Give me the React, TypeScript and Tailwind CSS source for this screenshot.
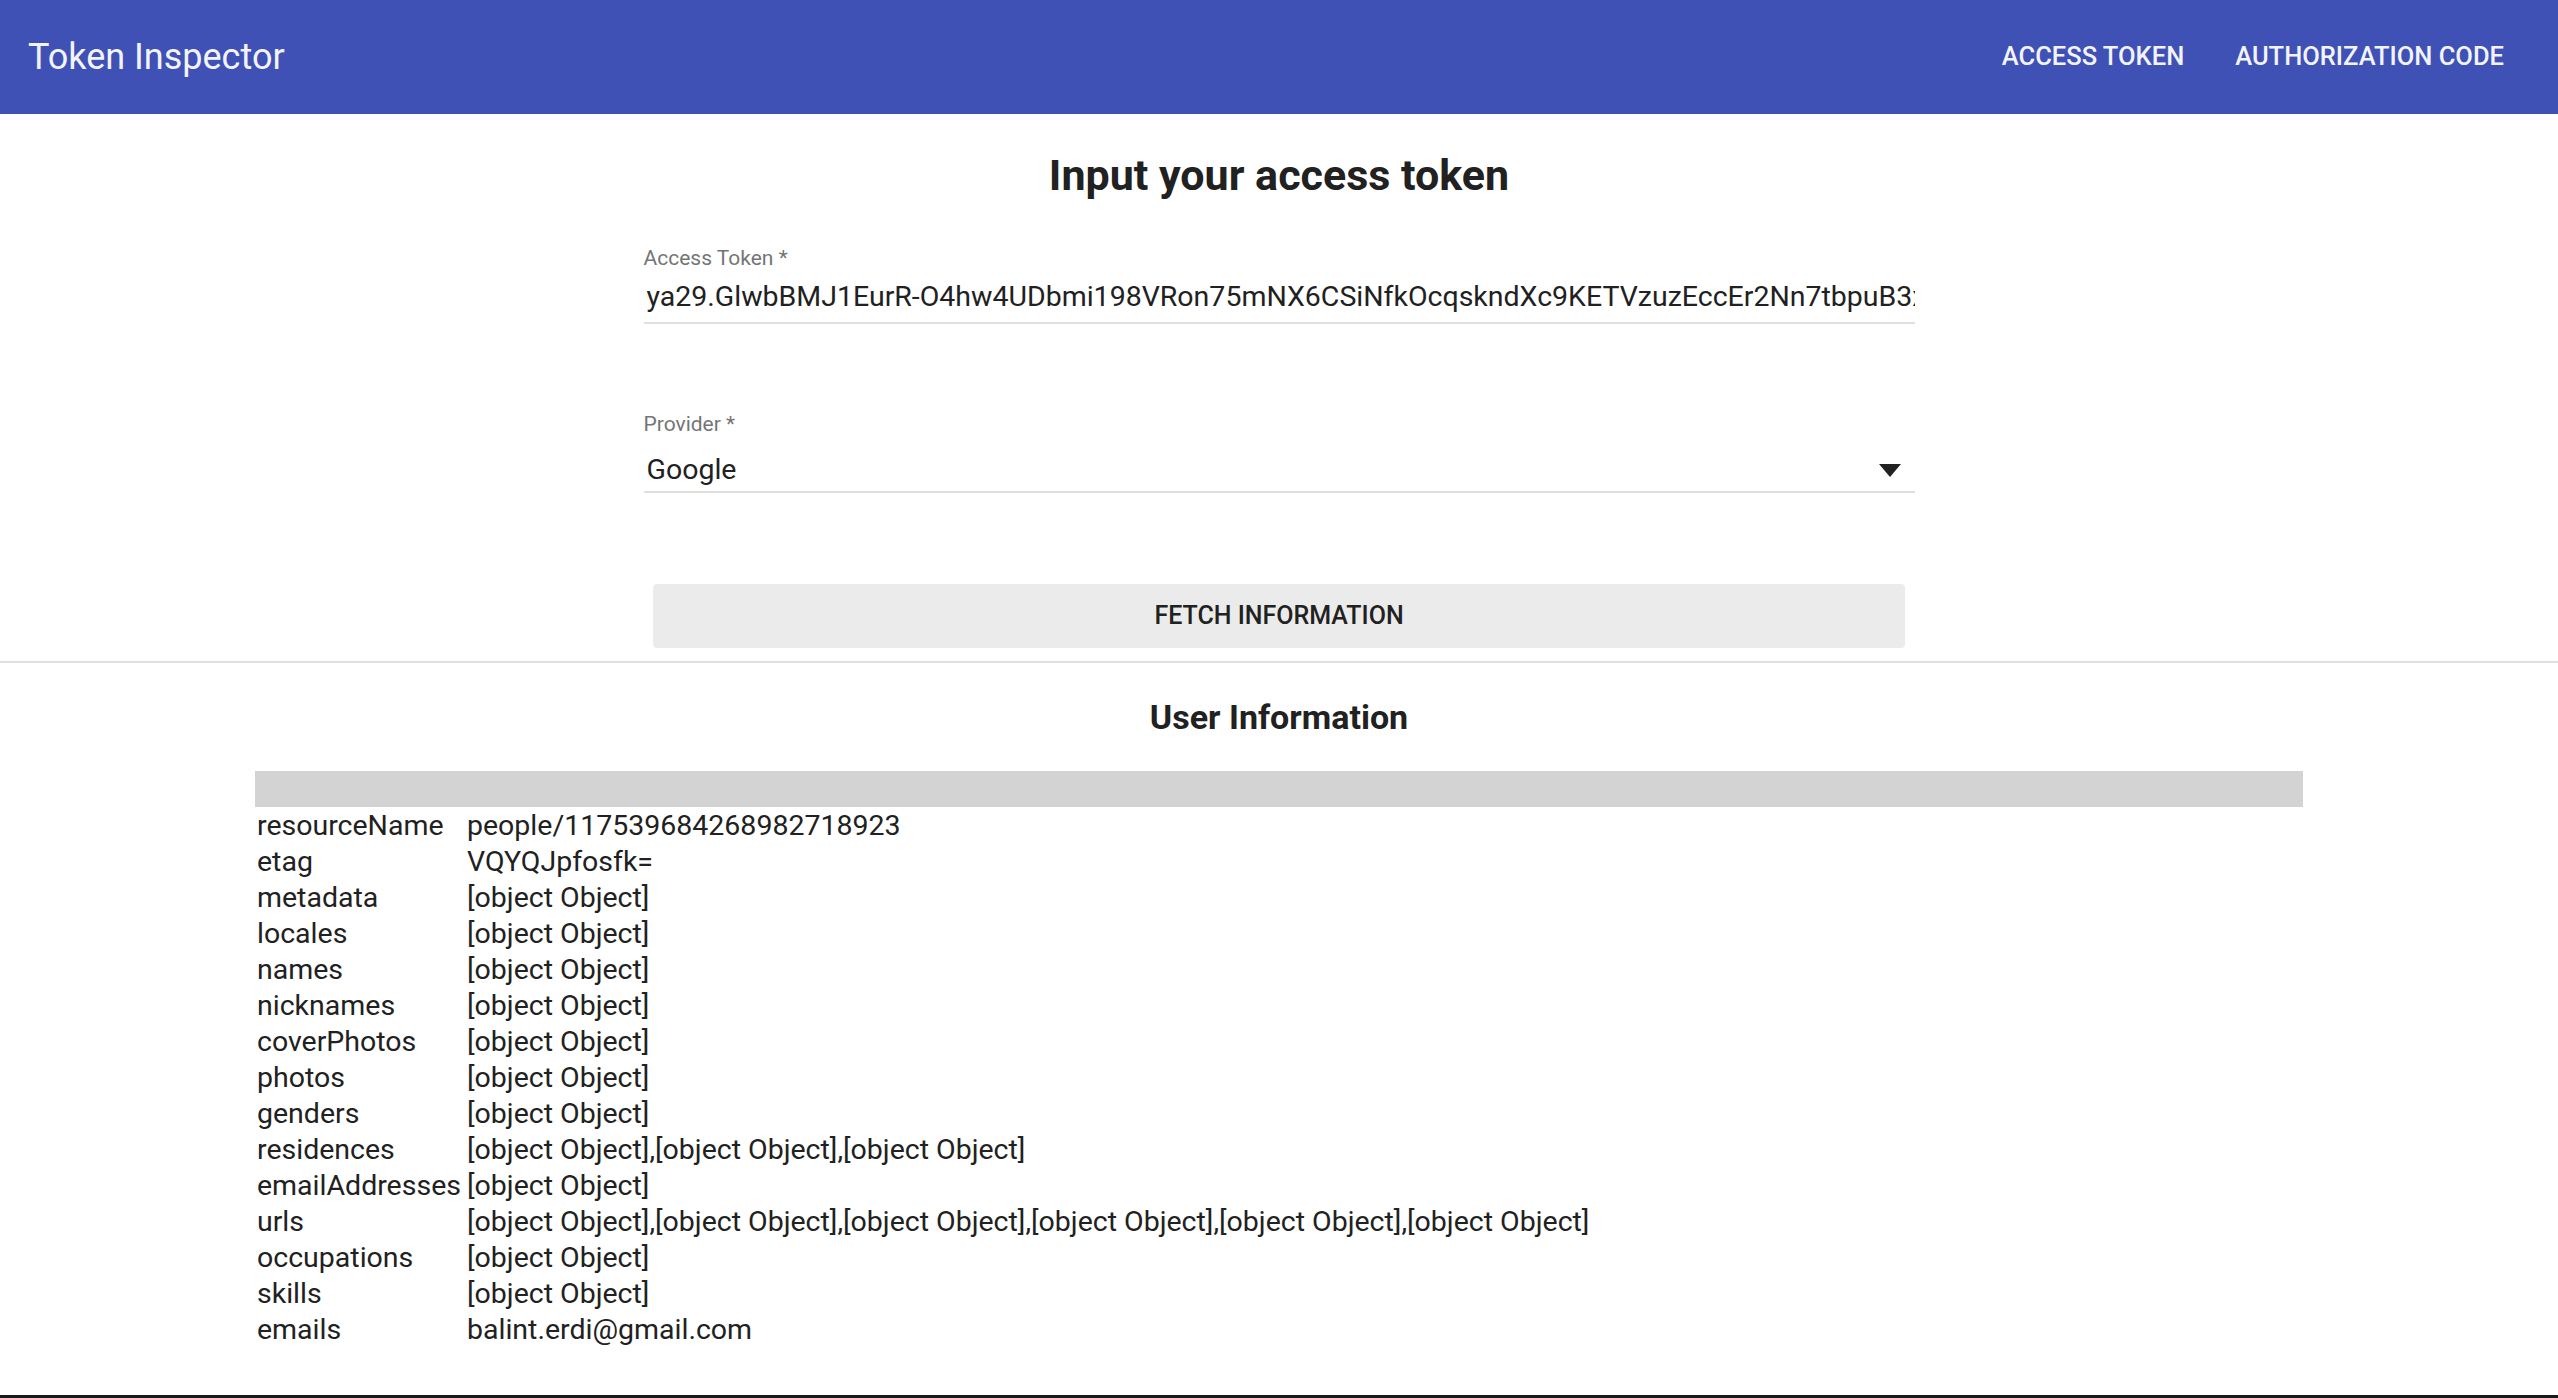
import React from "react";

const TOKEN =
  "ya29.GlwbBMJ1EurR-O4hw4UDbmi198VRon75mNX6CSiNfkOcqskndXc9KETVzuzEccEr2Nn7tbpuB3xQ8Lm2fKq9ZsT4uVwYt";

const OBJ = "[object Object]";

const ROWS: [string, string][] = [
  ["resourceName", "people/117539684268982718923"],
  ["etag", "VQYQJpfosfk="],
  ["metadata", OBJ],
  ["locales", OBJ],
  ["names", OBJ],
  ["nicknames", OBJ],
  ["coverPhotos", OBJ],
  ["photos", OBJ],
  ["genders", OBJ],
  ["residences", [OBJ, OBJ, OBJ].join(",")],
  ["emailAddresses", OBJ],
  ["urls", [OBJ, OBJ, OBJ, OBJ, OBJ, OBJ].join(",")],
  ["occupations", OBJ],
  ["skills", OBJ],
  ["emails", "balint.erdi@gmail.com"],
];

function Header() {
  return (
    <header className="flex h-[114px] shrink-0 items-center justify-between bg-[#3f51b5] pl-[28px] pr-[54px] text-[#f3f4fb]">
      <h1 className="text-[36px] font-normal leading-none">Token Inspector</h1>
      <nav className="flex items-center gap-[51px] text-[25.5px] font-medium uppercase leading-none">
        <a href="#">Access Token</a>
        <a href="#">Authorization Code</a>
      </nav>
    </header>
  );
}

function TokenForm() {
  return (
    <section className="flex flex-col items-center">
      <h2 className="mt-[36px] text-[43px] font-bold leading-[50px] text-[#212121]">
        Input your access token
      </h2>

      <div className="mt-[46px] w-[1271px]">
        <label className="block text-[21px] leading-[24px] text-[#757575]">Access Token *</label>
        <div className="mt-[10px] border-b-2 border-[#e0e0e0] pb-[8px] pl-[3px]">
          {/* token is longer than the field, clipped like the native input */}
          <div className="overflow-hidden whitespace-nowrap text-[28.5px] leading-[34px] text-[#212121]">
            {TOKEN}
          </div>
        </div>
      </div>

      <div className="mt-[88px] w-[1271px]">
        <label className="block text-[21px] leading-[24px] text-[#757575]">Provider *</label>
        <div className="mt-[17px] flex items-center justify-between border-b-2 border-[#e0e0e0] pb-[4px] pl-[3px] pr-[14px]">
          <span className="text-[28.5px] leading-[34px] text-[#212121]">Google</span>
          <svg width="22" height="13" viewBox="0 0 22 13">
            <path d="M0 0h22L11 13z" fill="#212121" />
          </svg>
        </div>
      </div>

      <button className="mt-[91px] h-[64px] w-[1252px] rounded-[4px] bg-[#ebebeb] text-[25px] font-medium uppercase text-[#212121]">
        Fetch Information
      </button>
    </section>
  );
}

function UserInfo() {
  return (
    <section className="flex flex-col items-center">
      <h2 className="mt-[33px] text-[34px] font-bold leading-[42px] text-[#212121]">User Information</h2>
      <table className="mt-[33px] w-[2048px] table-fixed border-collapse text-[28.5px] leading-[34px] text-[#212121]">
        <colgroup>
          <col className="w-[210px]" />
          <col />
        </colgroup>
        <thead>
          <tr className="h-[36px] bg-[#d3d3d3]">
            <th />
            <th />
          </tr>
        </thead>
        <tbody>
          {ROWS.map(([k, v]) => (
            <tr key={k}>
              <td className="whitespace-nowrap px-[2px] pb-0 pt-[2px]">{k}</td>
              <td className="whitespace-nowrap px-[2px] pb-0 pt-[2px]">{v}</td>
            </tr>
          ))}
        </tbody>
      </table>
    </section>
  );
}

export default function App() {
  return (
    <div className="flex h-screen flex-col bg-white font-['Roboto',sans-serif]">
      <Header />
      <main className="flex-1 overflow-hidden">
        <TokenForm />
        <div className="mt-[13px] h-[2px] w-full bg-[#e0e0e0]" />
        <UserInfo />
      </main>
      <div className="h-[3px] shrink-0 bg-[#1a1a1a]" />
    </div>
  );
}
